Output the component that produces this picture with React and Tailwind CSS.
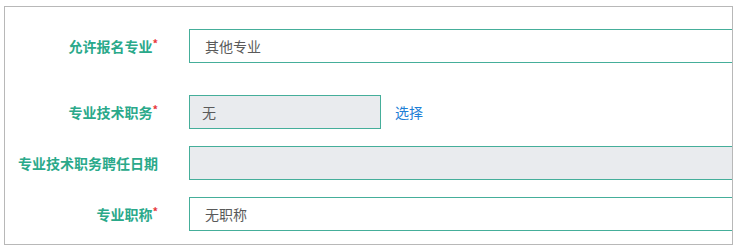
import React from "react";

const font = { fontFamily: '"Noto Sans CJK SC", "Noto Sans", sans-serif' };

function Label({ text, required }) {
  return (
    <div className="w-[153px] shrink-0 text-right text-[14px] font-bold text-[#2aa98a] leading-none">
      {text}
      {required && <span className="text-[11px] font-bold text-[#e8383d] align-top relative -top-[1px]">*</span>}
    </div>
  );
}

export default function App() {
  return (
    <div className="w-[741px] h-[248px] bg-white pt-[6px] pl-[4px]" style={font}>
      <div className="w-[729px] h-[239px] border border-[#b8b8b8] overflow-hidden pt-[22px]">
        <div className="flex items-center h-[34px]">
          <Label text="允许报名专业" required />
          <div className="ml-[31px] w-[600px] shrink-0 h-[34px] border border-[#45ae9a] bg-white flex items-center pl-[15px] text-[14px] text-[#5a5a5a]">
            其他专业
          </div>
        </div>
        <div className="flex items-center h-[34px] mt-[32px]">
          <Label text="专业技术职务" required />
          <div className="ml-[31px] w-[192px] shrink-0 h-[34px] border border-[#45ae9a] bg-[#e9ebee] flex items-center pl-[12px] text-[14px] text-[#5a5a5a]">
            无
          </div>
          <span className="ml-[14px] text-[14px] text-[#1e7fd6]">选择</span>
        </div>
        <div className="flex items-center h-[34px] mt-[17px]">
          <Label text="专业技术职务聘任日期" />
          <div className="ml-[31px] w-[600px] shrink-0 h-[34px] border border-[#45ae9a] bg-[#e9ebee]" />
        </div>
        <div className="flex items-center h-[34px] mt-[17px]">
          <Label text="专业职称" required />
          <div className="ml-[31px] w-[600px] shrink-0 h-[34px] border border-[#45ae9a] bg-white flex items-center pl-[15px] text-[14px] text-[#5a5a5a]">
            无职称
          </div>
        </div>
      </div>
    </div>
  );
}
